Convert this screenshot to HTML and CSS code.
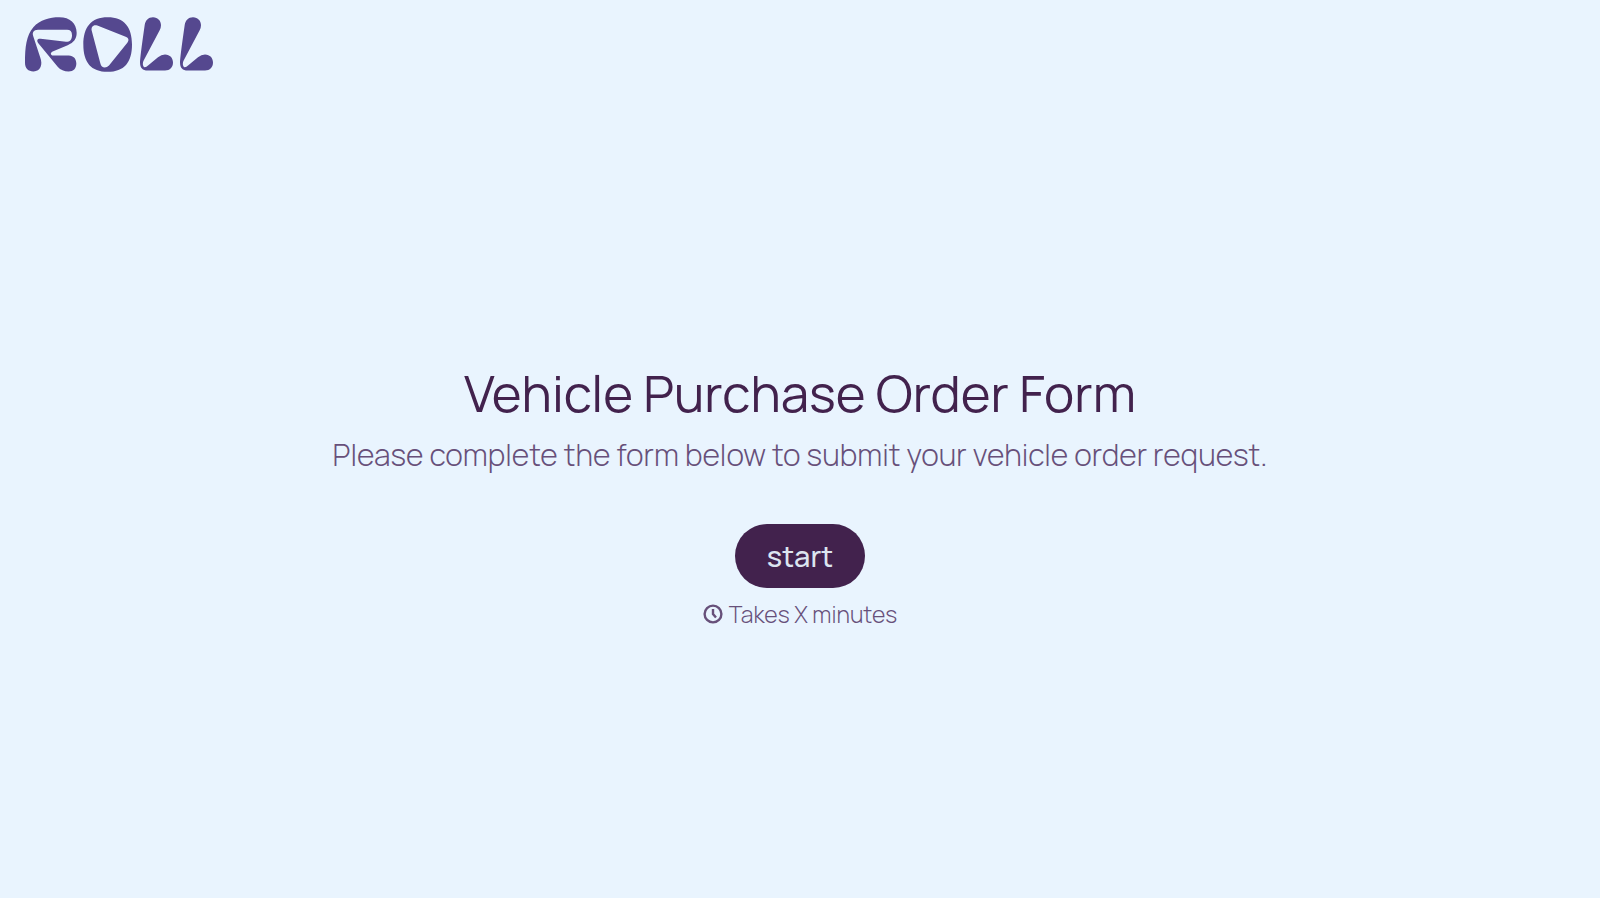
FILE: index.html
```
<!DOCTYPE html>
<html lang="en">
<head>
	<meta charset="UTF-8">
	<meta name="viewport" content="width=device-width, initial-scale=1.0">
	<title>Vehicle Purchase Order Form</title>
	<link rel="stylesheet" href="styles.css">
</head>
<body>
	<header class="header">
		<svg class="logo" viewBox="27 28 567 164" role="img" aria-label="Roll">
			<path d="M76 165C76 182 66 191 52 191C37 191 27 182 27 165C27 118 31 82 52 58C73 35 100 28 130 28C162 28 182 46 182 75C182 93 174 104 155 112L110 131C102 135 103 143 112 143L158 143C173 143 181 154 181 167C181 182 172 191 158 191C144 191 134 187 125 177L67 106C61 98 64 92 74 93L150 102C162 102 168 95 168 82C168 71 163 66 153 66L66 66C52 66 48 75 52 86L73 150Q76 158 76 165Z"/>
			<path fill-rule="evenodd" d="M275 28C325 28 348 58 348 110C348 164 325 192 275 192C225 192 202 164 202 110C202 58 225 28 275 28ZM244 53C232 49 225 57 227 68L253 166C256 181 270 182 279 173L334 105C340 97 338 91 329 87Z"/>
			<path id="l" d="M386 52C388 37 397 28 411 28C426 28 435 39 435 52Q435 59 431 67L383 158C379 166 380 177 386 178Q391 178 397 172L426 148Q436 140 447 140C462 140 471 151 471 164C471 178 462 188 447 188L395 188C380 188 372 180 372 163Q372 149 386 52Z"/>
			<use href="#l" x="120"/>
		</svg>
	</header>
	<main class="welcome">
		<h1 class="title">Vehicle Purchase Order Form</h1>
		<p class="desc">Please complete the form below to submit your vehicle order request.</p>
		<button class="start" type="button">start</button>
		<p class="time">
			<svg class="clock" viewBox="0 0 20 20" aria-hidden="true">
				<circle cx="10" cy="10" r="8.4"/>
				<path d="M10 5v5l3 3.5"/>
			</svg>
			<span>Takes X minutes</span>
		</p>
	</main>
</body>
</html>
```

FILE: styles.css
```
*{margin: 0; padding: 0; box-sizing: border-box;}
body{display: flex; flex-direction: column; min-height: 100vh; background: #e9f4fe; color: #42224d; font-family: Manrope, Inter, "Liberation Sans", sans-serif;}

.header{padding: 17px 25px;}
.logo{display: block; width: 189px; height: 55px; fill: #55488f;}

.welcome{flex: 1; display: flex; flex-direction: column; align-items: center; justify-content: center; padding: 4px 24px 0; text-align: center;}
.title{font-size: 51px; line-height: 64px; font-weight: 400;}
.desc{margin-top: 10px; font-size: 30px; line-height: 40px; font-weight: 350; color: #67507a;}

.start{margin-top: 49px; height: 64px; padding: 0 32px; border: 0; border-radius: 32px; background: #42224d; color: #dce5f0; font-family: inherit; font-size: 29px; font-weight: 500; cursor: pointer;}

.time{display: flex; align-items: center; gap: 6px; margin-top: 10px; font-size: 23px; line-height: 32px; font-weight: 350; color: #67507a;}
.clock{width: 20px; height: 20px; fill: none; stroke: #67507a; stroke-width: 2.4;}
```
